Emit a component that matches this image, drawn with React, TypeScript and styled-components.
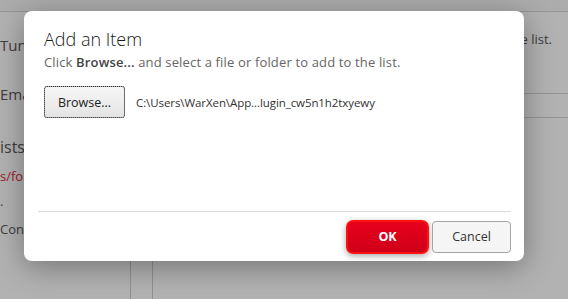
import React from "react";
import styled, { createGlobalStyle } from "styled-components";

const Global = createGlobalStyle`
  html, body { margin: 0; padding: 0; }
  body { font-family: "Open Sans", "Noto Sans", sans-serif; }
`;

const Page = styled.div`
  position: relative;
  width: 568px;
  height: 299px;
  overflow: hidden;
  background: #ffffff;
  display: flex;
  flex-direction: column;
`;

const TopBar = styled.div`
  height: 11px;
  flex: none;
  background: #f6f6f6;
  border-bottom: 1px solid #d4d4d4;
`;

const Body = styled.div`
  flex: 1;
  display: flex;
`;

const Sidebar = styled.div`
  width: 130px;
  flex: none;
  border-right: 1px solid #cfcfcf;
  display: flex;
  flex-direction: column;
  padding-top: 21px;
  overflow: hidden;
`;

const NavItem = styled.div<{ $size: number; $h: number; $red?: boolean }>`
  height: ${(p) => p.$h}px;
  display: flex;
  align-items: center;
  white-space: nowrap;
  font-size: ${(p) => p.$size}px;
  color: ${(p) => (p.$red ? "#e0283c" : "#5a5a5a")};
`;

const Gutter = styled.div`
  width: 21px;
  flex: none;
  border-right: 1px solid #cfcfcf;
`;

const Main = styled.div`
  flex: 1;
  display: flex;
  flex-direction: column;
`;

const MainText = styled.div`
  height: 82px;
  padding: 18px 16px 0 0;
  box-sizing: border-box;
  text-align: right;
  font-size: 13px;
  color: #5a5a5a;
  white-space: nowrap;
  border-bottom: 1px solid #d4d4d4;
`;

const MainRow = styled.div`
  height: 23px;
  border-bottom: 1px solid #d4d4d4;
`;

const Overlay = styled.div`
  position: absolute;
  inset: 0;
  background: rgba(0, 0, 0, 0.3);
`;

const Dialog = styled.div`
  position: absolute;
  left: 24px;
  top: 11px;
  width: 500px;
  height: 250px;
  background: #fff;
  border-radius: 8px;
  box-shadow: 0 6px 30px rgba(0, 0, 0, 0.35);
  display: flex;
  flex-direction: column;
`;

const DialogBody = styled.div`
  flex: 1;
  padding: 15px 20px 0 20px;
`;

const Title = styled.h1`
  margin: 0;
  font-weight: 300;
  font-size: 18px;
  line-height: 26px;
  color: #1a1a1a;
`;

const Subtitle = styled.p`
  margin: 1px 0 0 0;
  font-size: 13px;
  letter-spacing: 0.15px;
  line-height: 18px;
  color: #666;
  b { color: #444; font-weight: 600; }
`;

const FileRow = styled.div`
  margin-top: 15px;
  display: flex;
  align-items: center;
  gap: 11px;
`;

const BrowseButton = styled.button`
  width: 81px;
  height: 32px;
  box-sizing: border-box;
  border: 1px solid #a8a8a8;
  border-radius: 3px;
  background: linear-gradient(#f6f6f6, #e4e4e4);
  outline: 1px dotted #333;
  outline-offset: -1px;
  font-family: inherit;
  font-size: 12.5px;
  color: #222;
  padding: 0;
`;

const PathText = styled.span`
  font-size: 11.5px;
  color: #333;
  letter-spacing: -0.08px;
`;

const Footer = styled.div`
  height: 49px;
  margin: 0 13px 0 14px;
  border-top: 1px solid #dcdcdc;
  display: flex;
  justify-content: flex-end;
  align-items: center;
  gap: 3px;
`;

const OkButton = styled.button`
  width: 83px;
  height: 34px;
  box-sizing: border-box;
  border: 2px solid #ff1010;
  border-radius: 7px;
  background: linear-gradient(#e8001c, #cf0019);
  box-shadow: 0 2px 6px rgba(0, 0, 0, 0.35);
  color: #fff;
  font-family: inherit;
  font-weight: 700;
  font-size: 12.5px;
  padding: 0;
`;

const CancelButton = styled.button`
  width: 79px;
  height: 32px;
  box-sizing: border-box;
  border: 1px solid #a4a4a4;
  border-radius: 4px;
  background: #f5f5f5;
  color: #333;
  font-family: inherit;
  font-size: 12.5px;
  padding: 0;
`;

export default function App() {
  return (
    <>
      <Global />
      <Page>
        <TopBar />
        <Body>
          <Sidebar>
            <NavItem $size={15} $h={24}>Tunnel</NavItem>
            <NavItem $size={15} $h={25} />
            <NavItem $size={15} $h={24}>Email</NavItem>
            <NavItem $size={15} $h={27} />
            <NavItem $size={16} $h={27}>ists</NavItem>
            <NavItem $size={13} $h={32} $red>s/folders</NavItem>
            <NavItem $size={13} $h={18}>.</NavItem>
            <NavItem $size={13} $h={38}>Connections</NavItem>
          </Sidebar>
          <Gutter />
          <Main>
            <MainText>Click Add to add a file or folder to the list.</MainText>
            <MainRow />
          </Main>
        </Body>
        <Overlay />
        <Dialog>
          <DialogBody>
            <Title>Add an Item</Title>
            <Subtitle>
              Click <b>Browse...</b> and select a file or folder to add to the list.
            </Subtitle>
            <FileRow>
              <BrowseButton>Browse...</BrowseButton>
              <PathText>C:\Users\WarXen\App...lugin_cw5n1h2txyewy</PathText>
            </FileRow>
          </DialogBody>
          <Footer>
            <OkButton>OK</OkButton>
            <CancelButton>Cancel</CancelButton>
          </Footer>
        </Dialog>
      </Page>
    </>
  );
}
